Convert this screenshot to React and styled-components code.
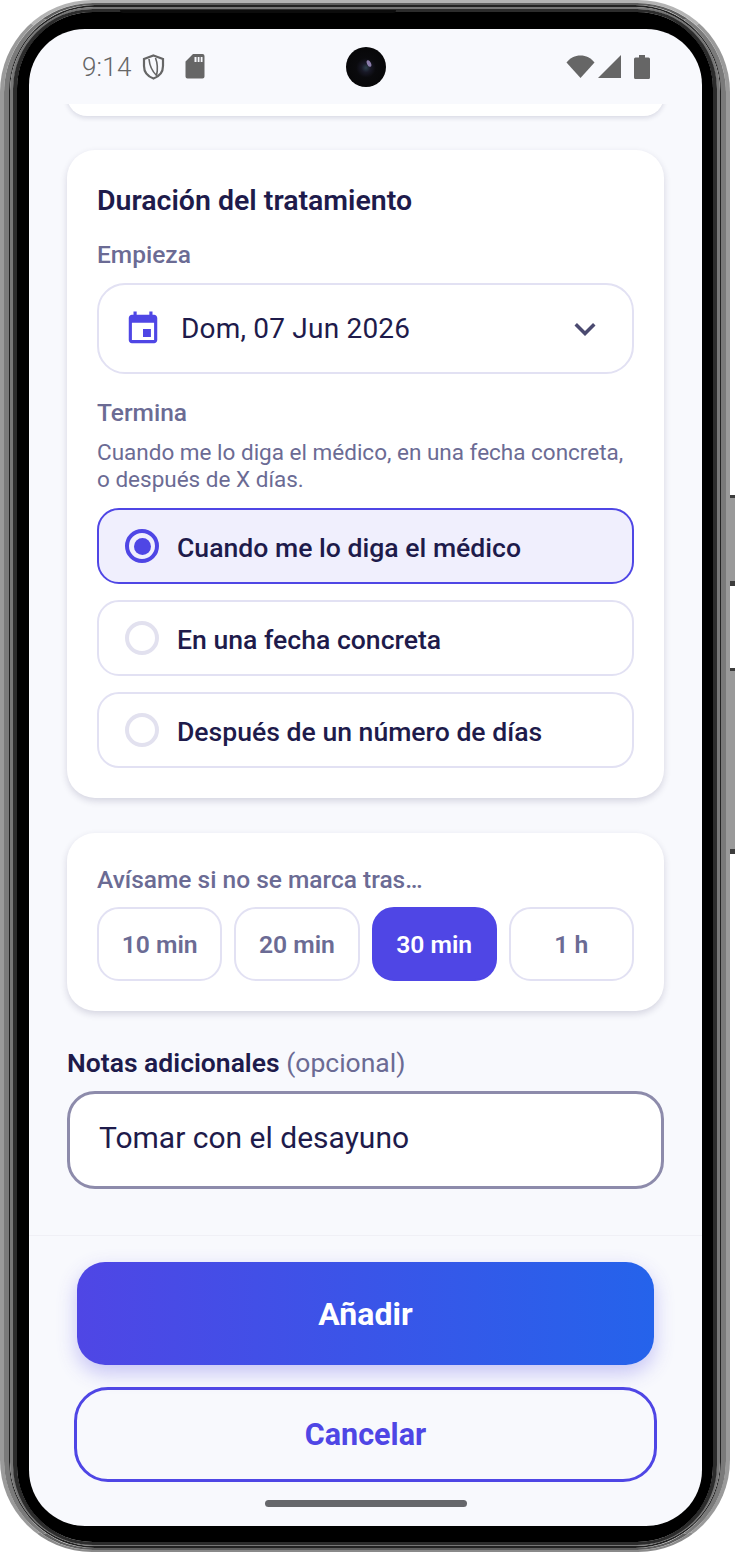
import React from 'react';
import styled, { createGlobalStyle } from 'styled-components';

const GlobalStyle = createGlobalStyle`
  html, body {
    margin: 0;
    padding: 0;
    background: #fff;
  }
  * { box-sizing: border-box; }
`;

const Device = styled.div`
  position: relative;
  width: 735px;
  height: 1553px;
  font-family: Roboto, "Liberation Sans", sans-serif;
`;

// one band of the metal rim, nested from the outside in
const Rim = styled.div`
  width: ${p => (p.$outer ? '730px' : 'auto')};
  height: ${p => (p.$outer ? '1552px' : '100%')};
  border-style: solid;
  border-width: ${p => p.$width};
  border-color: ${p => p.$color};
  border-radius: ${p => p.$radius}px;
`;

const Bezel = styled.div`
  height: 100%;
  padding: 17px 11px 14px 12px;
  background: #000;
  border-radius: 76px;
`;

const NotchEdge = styled.div`
  position: absolute;
  left: 120px;
  top: 10px;
  width: 276px;
  height: 3px;
  border-radius: 0 0 4px 4px;
  background: #0c0c0c;
`;

const SideKey = styled.div`
  position: absolute;
  left: 730px;
  top: ${p => p.$top}px;
  width: 5px;
  height: ${p => p.$height}px;
  background: #9a9a9a;
  border-top: 3px solid #3c3c3c;
  border-bottom: 5px solid #3c3c3c;
`;

const Screen = styled.div`
  display: flex;
  flex-direction: column;
  height: 1497px;
  border-radius: 56px;
  background: #f8f9fd;
  overflow: hidden;
`;

const StatusBar = styled.div`
  display: grid;
  grid-template-columns: 1fr 40px 1fr;
  align-items: center;
  height: 75px;
  flex: none;
  padding: 0 52px;
  color: #666;
`;

const StatusLeft = styled.div`
  display: flex;
  align-items: center;
`;

const StatusRight = styled.div`
  display: flex;
  align-items: center;
  justify-content: flex-end;
`;

const Time = styled.span`
  font-size: 26px;
  font-weight: 300;
  letter-spacing: 0.2px;
  margin: 0 10px 0 1px;
`;

const Camera = styled.div`
  position: relative;
  width: 40px;
  height: 40px;
  border-radius: 50%;
  background: radial-gradient(circle at 50% 52%, #2c3f4c 0, #181826 16%, #0a0a0d 34%, #050505 100%);
  &::after {
    content: '';
    position: absolute;
    left: 21px;
    top: 13px;
    width: 4px;
    height: 7px;
    border-radius: 50%;
    background: rgba(190, 170, 230, 0.7);
    transform: rotate(-25deg);
  }
`;

const Content = styled.div`
  flex: 1;
  display: flex;
  flex-direction: column;
  padding: 0 38px;
  min-height: 0;
`;

// bottom of the card scrolled away under the status bar
const ScrolledCard = styled.div`
  height: 18px;
  margin: 0 -6px 28px;
  padding: 0 6px;
  overflow: hidden;
  div {
    height: 40px;
    margin-top: -28px;
    background: #fff;
    border-radius: 28px;
    box-shadow: 0 2px 5px rgba(30, 27, 75, 0.14);
  }
`;

const Card = styled.section`
  background: #fff;
  border-radius: 28px;
  padding: ${p => p.$pad};
  margin-bottom: 35px;
  box-shadow: 0 3px 7px rgba(30, 27, 75, 0.16);
`;

const CardTitle = styled.h2`
  margin: 0 0 24px;
  font-size: 28.5px;
  line-height: 32px;
  font-weight: 600;
  color: #1e1b4b;
`;

const FieldLabel = styled.div`
  font-size: 24.5px;
  line-height: 28px;
  font-weight: 500;
  color: #6b6b94;
  margin-bottom: ${p => p.$gap}px;
`;

const DateSelect = styled.div`
  display: flex;
  align-items: center;
  height: 91px;
  padding: 0 26px 0 25px;
  margin-bottom: 25px;
  border: 2px solid #e2e1f3;
  border-radius: 28px;
  color: #1e1b4b;
`;

const DateText = styled.span`
  flex: 1;
  margin-left: 19px;
  font-size: 28px;
  letter-spacing: 0.2px;
`;

const HelpText = styled.p`
  margin: 0 0 15px;
  font-size: 22.5px;
  line-height: 27px;
  color: #6b6b94;
`;

const OptionList = styled.div`
  display: flex;
  flex-direction: column;
  gap: 16px;
`;

const Option = styled.div`
  display: flex;
  align-items: center;
  gap: 18px;
  height: 76px;
  padding: 0 26px;
  border: 2px solid ${p => (p.$selected ? '#4f46e5' : '#e2e1f3')};
  border-radius: 22px;
  background: ${p => (p.$selected ? '#f0effd' : '#fff')};
  font-size: 26.6px;
  font-weight: 500;
  color: #1e1b4b;
`;

const OptionText = styled.span`
  padding-top: 3px;
`;

const Radio = styled.span`
  display: flex;
  align-items: center;
  justify-content: center;
  width: 34px;
  height: 34px;
  border-radius: 50%;
  border: 4px solid ${p => (p.$selected ? '#4f46e5' : '#e2e1ef')};
  &::after {
    content: '';
    display: ${p => (p.$selected ? 'block' : 'none')};
    width: 17px;
    height: 17px;
    border-radius: 50%;
    background: #4f46e5;
  }
`;

const ChipRow = styled.div`
  display: grid;
  grid-template-columns: repeat(4, 1fr);
  gap: 12px;
`;

const Chip = styled.div`
  display: flex;
  align-items: center;
  justify-content: center;
  height: 74px;
  padding-top: 1px;
  border: 2px solid ${p => (p.$selected ? '#4f46e5' : '#e2e1f3')};
  border-radius: 22px;
  background: ${p => (p.$selected ? '#4f46e5' : '#fff')};
  color: ${p => (p.$selected ? '#fff' : '#6b6b94')};
  font-size: 24.7px;
  font-weight: 600;
`;

const NotesLabel = styled.div`
  margin: 1px 0 12px;
  font-size: 26.5px;
  line-height: 32px;
  font-weight: 600;
  color: #1e1b4b;
  span {
    font-weight: 400;
    color: #6b6b94;
  }
`;

const NotesInput = styled.div`
  display: flex;
  align-items: flex-start;
  height: 98px;
  padding: 26px 29px 0;
  background: #fff;
  border: 3px solid #8d8bab;
  border-radius: 28px;
  font-size: 30px;
  line-height: 36px;
  color: #1e1b4b;
`;

const Footer = styled.div`
  flex: none;
  display: flex;
  flex-direction: column;
  align-items: center;
  padding: 26px 0 19px;
  border-top: 1px solid #f0f0f6;
`;

const PrimaryButton = styled.div`
  display: flex;
  align-items: center;
  justify-content: center;
  width: 577px;
  height: 103px;
  margin-bottom: 22px;
  border-radius: 28px;
  background: linear-gradient(90deg, #4f46e5, #2563eb);
  box-shadow: 0 8px 20px rgba(79, 70, 229, 0.3);
  color: #fff;
  font-size: 32px;
  font-weight: 700;
`;

const SecondaryButton = styled.div`
  display: flex;
  align-items: center;
  justify-content: center;
  width: 583px;
  height: 95px;
  margin-bottom: 18px;
  border: 3px solid #4f46e5;
  border-radius: 34px;
  color: #4f46e5;
  font-size: 30.5px;
  font-weight: 700;
`;

const HomeBar = styled.div`
  width: 202px;
  height: 7px;
  border-radius: 4px;
  background: #66676b;
`;

const ShieldIcon = () => (
  <svg width="23" height="26" viewBox="0 0 23 26" fill="none" stroke="#666" strokeWidth="2.2">
    <path d="M11.5 1.5 L21 5 V12 C21 18 17 22.5 11.5 24.5 C6 22.5 2 18 2 12 V5 Z" />
    <path d="M7 5 C7.5 11 10 17 14.5 21.5 C16 15 15.5 9 13.5 4" strokeWidth="1.6" />
  </svg>
);

const SdIcon = () => (
  <svg width="20" height="25" viewBox="0 0 20 25" style={{ marginLeft: 20 }}>
    <path fill="#666" fillRule="evenodd" d="M8 0 H17.5 A2 2 0 0 1 19.5 2 V22.5 A2 2 0 0 1 17.5 24.5 H2.5 A2 2 0 0 1 0.5 22.5 V7.5 Z M9.5 3 V8 H11.5 V3 Z M12.7 3 V8 H14.5 V3 Z M15.7 3 V8 H17.5 V3 Z" />
  </svg>
);

const WifiIcon = () => (
  <svg width="29" height="23" viewBox="0 0 29 23">
    <path fill="#666" d="M14.5 23 L0.5 7.5 C4 3 9 0.5 14.5 0.5 C20 0.5 25 3 28.5 7.5 Z" />
  </svg>
);

const SignalIcon = () => (
  <svg width="23" height="23" viewBox="0 0 23 23" style={{ marginLeft: 3 }}>
    <path fill="#666" d="M23 0 V23 H0 Z" />
  </svg>
);

const BatteryIcon = () => (
  <svg width="16" height="24" viewBox="0 0 16 24" style={{ marginLeft: 13 }}>
    <path fill="#666" d="M5 0 H11 V2.5 H14.5 A1.5 1.5 0 0 1 16 4 V22.5 A1.5 1.5 0 0 1 14.5 24 H1.5 A1.5 1.5 0 0 1 0 22.5 V4 A1.5 1.5 0 0 1 1.5 2.5 H5 Z" />
  </svg>
);

const CalendarIcon = () => (
  <svg width="38" height="38" viewBox="0 0 24 24" fill="#4f46e5">
    <path d="M17 12h-5v5h5v-5zM16 1v2H8V1H6v2H5c-1.11 0-1.99.9-1.99 2L3 19c0 1.1.89 2 2 2h14c1.1 0 2-.9 2-2V5c0-1.1-.9-2-2-2h-1V1h-2zm3 18H5V8h14v11z" />
  </svg>
);

const ChevronIcon = () => (
  <svg width="42" height="42" viewBox="0 0 24 24" fill="#4b4a70">
    <path d="M16.59 8.59L12 13.17 7.41 8.59 6 10l6 6 6-6z" />
  </svg>
);

const endOptions = ['Cuando me lo diga el médico', 'En una fecha concreta', 'Después de un número de días'];
const delays = ['10 min', '20 min', '30 min', '1 h'];

const App = () => {
  return (
    <Device>
      <GlobalStyle />
      <Rim $outer $width="3px 4px 2px" $color="#b4b4b4 #9a9a9a #8a8a8a" $radius={92}>
        <Rim $width="2px 5px" $color="#5e5e5e #7a7a7a" $radius={89}>
          <Rim $width="2px 1px" $color="#222" $radius={86}>
            <Rim $width="2px 3px 1px" $color="#777" $radius={84}>
              <Rim $width="3px 4px" $color="#2c2c2c" $radius={80}>
                <Bezel>
                  <Screen>
                    <StatusBar>
                      <StatusLeft>
                        <Time>9:14</Time>
                        <ShieldIcon />
                        <SdIcon />
                      </StatusLeft>
                      <Camera />
                      <StatusRight>
                        <WifiIcon />
                        <SignalIcon />
                        <BatteryIcon />
                      </StatusRight>
                    </StatusBar>
                    <Content>
                      <ScrolledCard><div /></ScrolledCard>
                      <Card $pad="35px 30px 30px">
                        <CardTitle>Duración del tratamiento</CardTitle>
                        <FieldLabel $gap={14}>Empieza</FieldLabel>
                        <DateSelect>
                          <CalendarIcon />
                          <DateText>Dom, 07 Jun 2026</DateText>
                          <ChevronIcon />
                        </DateSelect>
                        <FieldLabel $gap={12}>Termina</FieldLabel>
                        <HelpText>
                          Cuando me lo diga el médico, en una fecha concreta,
                          <br />
                          o después de X días.
                        </HelpText>
                        <OptionList>
                          {endOptions.map((label, index) => (
                            <Option key={label} $selected={index === 0}>
                              <Radio $selected={index === 0} />
                              <OptionText>{label}</OptionText>
                            </Option>
                          ))}
                        </OptionList>
                      </Card>
                      <Card $pad="33px 30px 30px">
                        <FieldLabel $gap={13}>Avísame si no se marca tras…</FieldLabel>
                        <ChipRow>
                          {delays.map(label => (
                            <Chip key={label} $selected={label === '30 min'}>{label}</Chip>
                          ))}
                        </ChipRow>
                      </Card>
                      <NotesLabel>
                        Notas adicionales <span>(opcional)</span>
                      </NotesLabel>
                      <NotesInput>Tomar con el desayuno</NotesInput>
                    </Content>
                    <Footer>
                      <PrimaryButton>Añadir</PrimaryButton>
                      <SecondaryButton>Cancelar</SecondaryButton>
                      <HomeBar />
                    </Footer>
                  </Screen>
                </Bezel>
              </Rim>
            </Rim>
          </Rim>
        </Rim>
      </Rim>
      <NotchEdge />
      <SideKey $top={495} $height={91} />
      <SideKey $top={668} $height={186} />
    </Device>
  );
};

export default App;
